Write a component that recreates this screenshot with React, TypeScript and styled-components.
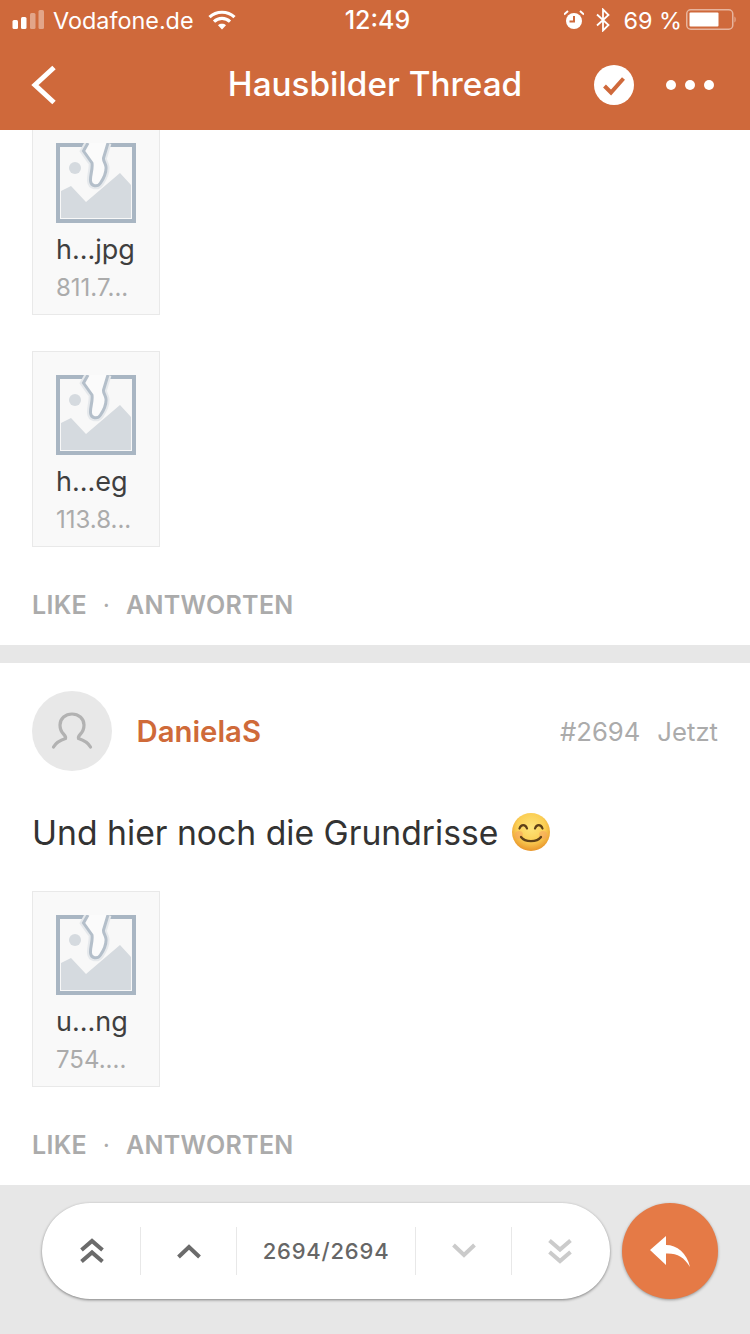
import React from "react";
import styled, { createGlobalStyle } from "styled-components";

const Global = createGlobalStyle`
  html, body { margin: 0; padding: 0; background: #fff; }
  body { font-family: Inter, "Liberation Sans", sans-serif; }
`;

const Page = styled.div`
  width: 750px; height: 1334px; display: flex; flex-direction: column; overflow: hidden; background: #fff;
`;
const Header = styled.header`
  background: #cf693b; color: #fff; flex: none;
`;
const StatusBar = styled.div`
  height: 40px; padding: 0 14px 0 12px; display: grid; grid-template-columns: 1fr auto 1fr; align-items: center; box-sizing: border-box;
  font-size: 23.4px; font-weight: 400;
`;
const StatusGroup = styled.div<{ $end?: boolean }>`
  display: flex; align-items: center; justify-content: ${p => (p.$end ? "flex-end" : "flex-start")};
`;
const Carrier = styled.span`
  margin-left: 8px; margin-right: 14px;
`;
const Clock = styled.span`
  font-weight: 500; font-size: 25px; margin-left: 7px;
`;
const Battery = styled.span`
  margin: 0 4px 0 12px;
`;
const NavBar = styled.nav`
  height: 90px; display: grid; grid-template-columns: 1fr auto 1fr; align-items: center; padding: 0 36px 2px 36px; box-sizing: border-box;
`;
const BackButton = styled.div`
  margin-left: -5px; margin-top: 2px;
`;
const Title = styled.h1`
  margin: 0; font-size: 33.3px; font-weight: 500;
`;
const NavActions = styled.div`
  display: flex; align-items: center; justify-content: flex-end; gap: 32px; margin-top: 2px;
`;
const Content = styled.main`
  flex: 1; overflow: hidden; min-height: 0;
`;
const Post = styled.article`
  padding: 0 32px 22px;
`;
const Divider = styled.div`
  height: 18px; background: #e7e7e7;
`;
const TileStack = styled.div<{ $clipped?: boolean }>`
  display: flex; flex-direction: column; gap: 36px; margin-top: ${p => (p.$clipped ? "-11px" : "39px")};
`;
const Tile = styled.div`
  width: 128px; height: 196px; box-sizing: border-box; background: #f9f9f9; border: 1px solid #e9e9e9;
  padding: 23px 0 0 23px; overflow: hidden;
`;
const TileName = styled.div`
  margin-top: 9px; font-size: 27px; line-height: 36px; color: #3f3f3f; white-space: nowrap;
`;
const TileSize = styled.div`
  margin-top: 3px; font-size: 24px; line-height: 34px; color: #ababab; white-space: nowrap;
`;
const Actions = styled.div`
  margin-top: 40px; display: flex; align-items: center; height: 36px; font-size: 25px; font-weight: 600; color: #ababab; letter-spacing: .3px;
`;
const Dot = styled.span`
  width: 39px; text-align: center; font-weight: 500; font-size: 22px;
`;
const PostHead = styled.div`
  padding-top: 28px; display: flex; align-items: center;
`;
const Avatar = styled.div`
  width: 80px; height: 80px; border-radius: 50%; background: #e8e8e8; display: flex; align-items: center; justify-content: center; flex: none;
`;
const Author = styled.div`
  margin-left: 24.5px; font-size: 29.3px; font-weight: 600; color: #cf6a39;
`;
const Meta = styled.div`
  margin-left: auto; display: flex; gap: 17px; font-size: 25.7px; color: #ababab;
`;
const Body = styled.p`
  margin: 41px 0 0; height: 40px; display: flex; align-items: center; gap: 13px; font-size: 33.7px; color: #333;
`;
const BottomBar = styled.footer`
  height: 149px; flex: none; box-sizing: border-box; background: #e7e7e7; padding: 18px 0 0 42px; display: flex; align-items: flex-start; gap: 12px;
`;
const Pager = styled.div`
  width: 568px; height: 96px; border-radius: 48px; background: #fff; box-shadow: 0 1px 3px rgba(0,0,0,.45); display: flex; align-items: center;
`;
const PagerCell = styled.div<{ $w: number; $sep?: boolean; $inset?: number }>`
  width: ${p => p.$w}px; height: 48px; display: flex; align-items: center; justify-content: center; flex: none;
  box-sizing: border-box; border-left: ${p => (p.$sep ? "1px solid #e8e8e8" : "none")}; padding-left: ${p => p.$inset ?? 0}px;
`;
const PagerText = styled.span`
  font-size: 22px; font-weight: 500; color: #666; letter-spacing: .8px;
`;
const Fab = styled.button`
  width: 96px; height: 96px; border-radius: 50%; border: 0; padding: 2px 0 0; background: #e57a46; box-shadow: 0 1px 3px rgba(0,0,0,.35);
  display: flex; align-items: center; justify-content: center;
`;
const Svg = styled.svg`
  display: block; flex: none;
`;

const Signal = () => (
  <Svg width="33" height="20" viewBox="0 0 33 20">
    <rect x=".5" y="10" width="5.5" height="9" rx="1.5" fill="#fff" />
    <rect x="9" y="7" width="5.5" height="12" rx="1.5" fill="#fff" />
    <rect x="18" y="3" width="5.5" height="16" rx="1.5" fill="#fff" fillOpacity=".4" />
    <rect x="26.5" y="0" width="5.5" height="19" rx="1.5" fill="#fff" fillOpacity=".4" />
  </Svg>
);
const Wifi = () => (
  <Svg width="28" height="20" viewBox="0 0 28 20" fill="none" stroke="#fff" strokeWidth="3.2">
    <path d="M1.5 7.2C8.5 .6 19.5 .6 26.5 7.2" />
    <path d="M6 11.6c4.600-4.200 11.400-4.200 16 0" />
    <path d="M14 19.500l-4-4.300c2.300-1.900 5.700-1.900 8 0z" fill="#fff" stroke="none" />
  </Svg>
);
const Alarm = () => (
  <Svg width="20" height="20" viewBox="0 0 20 20">
    <circle cx="10" cy="11" r="8" fill="#fff" />
    <path d="M10 6v5.500H5.500" fill="none" stroke="#cf693b" strokeWidth="2" />
    <path d="M0 4.500 4 1M20 4.500 16 1" stroke="#fff" strokeWidth="2" />
  </Svg>
);
const Bluetooth = () => (
  <Svg width="16" height="24" viewBox="0 0 16 24" fill="none" stroke="#fff" strokeWidth="1.800" style={{ marginLeft: 11 }}>
    <path d="M2 6.500 13.500 17 8 22.500V1.500L13.500 7 2 17.500" />
  </Svg>
);
const BatteryIcon = () => (
  <Svg width="50" height="22" viewBox="0 0 50 22">
    <rect x=".75" y=".75" width="46" height="19.500" rx="4" fill="none" stroke="#fff" strokeOpacity=".5" strokeWidth="1.500" />
    <rect x="3.500" y="3.500" width="29" height="14" rx="1" fill="#fff" />
    <path d="M48.500 7.500c1.500.5 1.500 5.500 0 6z" fill="#fff" fillOpacity=".5" />
  </Svg>
);
const Back = () => (
  <Svg width="26" height="40" viewBox="0 0 26 40" fill="none" stroke="#fff" strokeWidth="5">
    <path d="M23 2.500 4 20l19 17.500" />
  </Svg>
);
const CheckBadge = () => (
  <Svg width="40" height="40" viewBox="0 0 40 40">
    <circle cx="20" cy="20" r="20" fill="#fff" />
    <path d="M10.500 21l6.500 6.500L29.500 13.500" fill="none" stroke="#cf693b" strokeWidth="4" />
  </Svg>
);
const More = () => (
  <Svg width="48" height="10" viewBox="0 0 48 10" fill="#fff">
    <circle cx="5" cy="5" r="5" />
    <circle cx="24" cy="5" r="5" />
    <circle cx="43" cy="5" r="5" />
  </Svg>
);
const crackEdge = "M32 0 27.500 8 36 20c1 6-2 12-1.500 18 .5 5.500 7 6.500 10 2 2.800-4.200 6-10 5.500-16-.3-3.500-3-6-2.500-9L52 0";
const BrokenImage = () => (
  <Svg width="80" height="80" viewBox="0 0 80 80">
    <rect x="2" y="2" width="76" height="76" fill="#f8f8f8" stroke="#a9b6c3" strokeWidth="4" />
    <path d="M5 48 15 43l15 16 34-29 11 12v33H5z" fill="#d5dadf" />
    <circle cx="19" cy="25" r="6" fill="#d5dadf" />
    <path d={crackEdge} fill="#e6e9ec" stroke="#e6e9ec" strokeWidth="7" />
    <path d={crackEdge} fill="#fbfbfb" stroke="#b4bfca" strokeWidth="3" />
  </Svg>
);
const Person = () => (
  <Svg width="42" height="38" viewBox="0 0 42 38" fill="none" stroke="#b2b2b2" strokeWidth="3.200" strokeLinecap="round">
    <path d="M2.500 35c2.500-4.500 7-7 12-8.500 .5-1.500-.5-3-2-4.500-2-2-3.500-5-3.500-9C9 6.500 14.500 2 21 2s12 4.500 12 11c0 4-1.500 7-3.500 9-1.500 1.500-2.500 3-2 4.500 5 1.500 9.500 4 12 8.500" />
  </Svg>
);
const Smile = () => (
  <Svg width="40" height="40" viewBox="0 0 40 40">
    <defs>
      <radialGradient id="face" cx="50%" cy="38%" r="62%">
        <stop offset="0" stopColor="#fde47a" />
        <stop offset=".6" stopColor="#fbcf55" />
        <stop offset="1" stopColor="#e8952a" />
      </radialGradient>
    </defs>
    <circle cx="20" cy="20" r="19" fill="url(#face)" />
    <circle cx="8" cy="23" r="4" fill="#f5a25f" fillOpacity=".55" />
    <circle cx="32" cy="23" r="4" fill="#f5a25f" fillOpacity=".55" />
    <g fill="none" stroke="#5e4018" strokeWidth="2.200" strokeLinecap="round">
      <path d="M8.500 16.500c1.500-4.500 6-4.500 7.500 0" />
      <path d="M24 16.500c1.500-4.500 6-4.500 7.500 0" />
      <path d="M10 25c4 5.500 16 5.500 20 0" />
    </g>
  </Svg>
);
const Chevron = ({ up, double, color }: { up?: boolean; double?: boolean; color: string }) => (
  <Svg width="26" height="26" viewBox="0 0 26 26" fill="none" stroke={color} strokeWidth="4" style={{ transform: up ? "none" : "rotate(180deg)" }}>
    {double ? (
      <>
        <path d="M2.500 12 13 3l10.500 9" />
        <path d="M2.500 23.500 13 14.500l10.500 9" />
      </>
    ) : (
      <path d="M2.500 19 13 9l10.500 10" />
    )}
  </Svg>
);
const Reply = () => (
  <Svg width="40" height="32" viewBox="0 0 40 32" fill="#fff">
    <path d="M0 14 16 0v9c11 0 21 8 24 22C34 21 27 17 16 17.500V29z" />
  </Svg>
);

const FileTile = ({ name, size }: { name: string; size: string }) => (
  <Tile>
    <BrokenImage />
    <TileName>{name}</TileName>
    <TileSize>{size}</TileSize>
  </Tile>
);
const PostActions = () => (
  <Actions>
    <span>LIKE</span>
    <Dot>·</Dot>
    <span>ANTWORTEN</span>
  </Actions>
);

export default function App() {
  return (
    <Page>
      <Global />
      <Header>
        <StatusBar>
          <StatusGroup>
            <Signal />
            <Carrier>Vodafone.de</Carrier>
            <Wifi />
          </StatusGroup>
          <Clock>12:49</Clock>
          <StatusGroup $end>
            <Alarm />
            <Bluetooth />
            <Battery>69 %</Battery>
            <BatteryIcon />
          </StatusGroup>
        </StatusBar>
        <NavBar>
          <BackButton><Back /></BackButton>
          <Title>Hausbilder Thread</Title>
          <NavActions>
            <CheckBadge />
            <More />
          </NavActions>
        </NavBar>
      </Header>
      <Content>
        <Post>
          <TileStack $clipped>
            <FileTile name="h...jpg" size="811.7..." />
            <FileTile name="h...eg" size="113.8..." />
          </TileStack>
          <PostActions />
        </Post>
        <Divider />
        <Post>
          <PostHead>
            <Avatar>
              <Person />
            </Avatar>
            <Author>DanielaS</Author>
            <Meta>
              <span>#2694</span>
              <span>Jetzt</span>
            </Meta>
          </PostHead>
          <Body>
            Und hier noch die Grundrisse
            <Smile />
          </Body>
          <TileStack>
            <FileTile name="u...ng" size="754...." />
          </TileStack>
          <PostActions />
        </Post>
      </Content>
      <BottomBar>
        <Pager>
          <PagerCell $w={98} $inset={2}><Chevron up double color="#6b6b6b" /></PagerCell>
          <PagerCell $w={96} $sep><Chevron up color="#6b6b6b" /></PagerCell>
          <PagerCell $w={179} $sep><PagerText>2694/2694</PagerText></PagerCell>
          <PagerCell $w={96} $sep><Chevron color="#cbcbcb" /></PagerCell>
          <PagerCell $w={97} $sep><Chevron double color="#cbcbcb" /></PagerCell>
        </Pager>
        <Fab aria-label="Antworten"><Reply /></Fab>
      </BottomBar>
    </Page>
  );
}
